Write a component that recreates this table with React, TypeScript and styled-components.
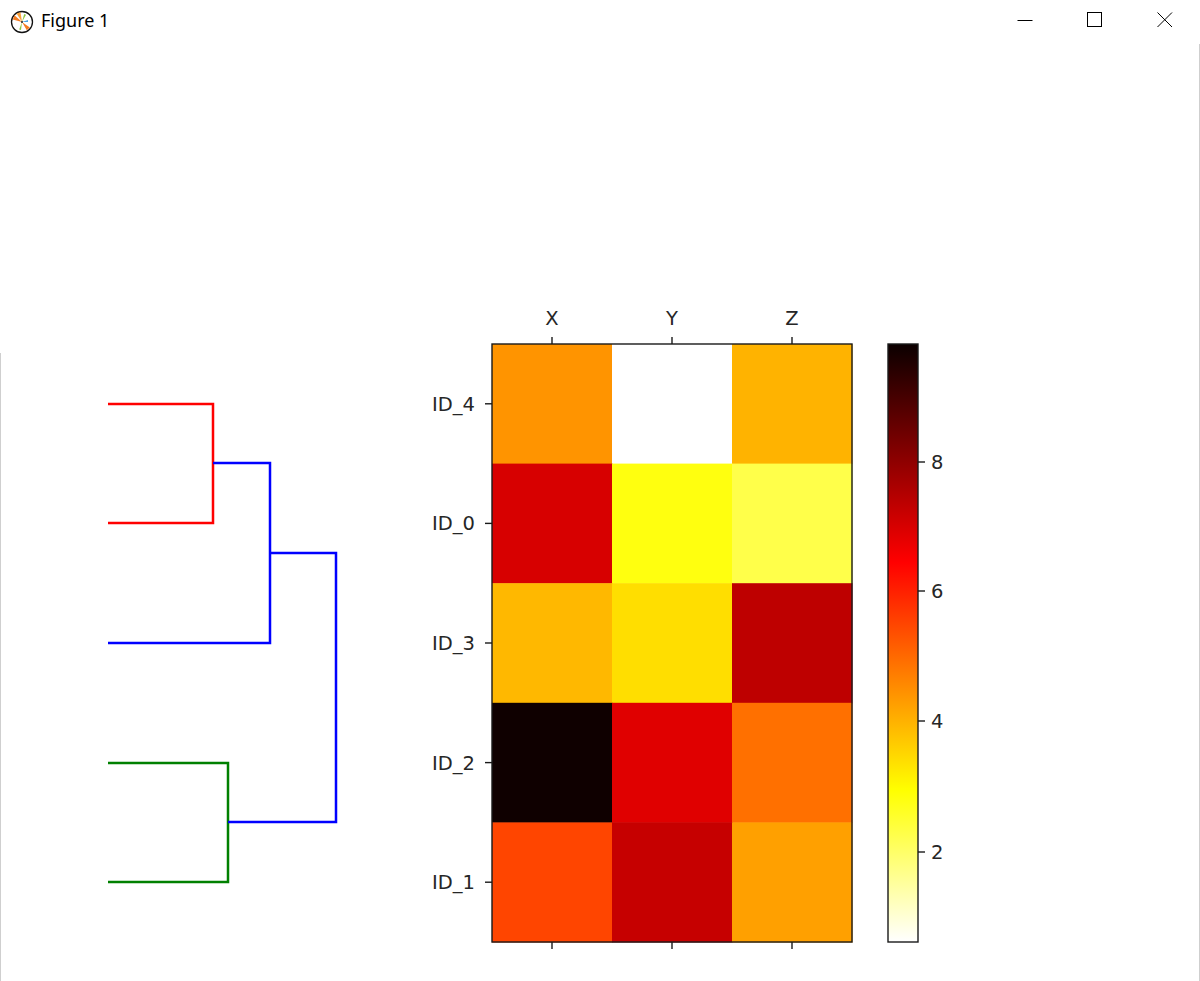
import styled, { createGlobalStyle } from "styled-components";

const GlobalStyle = createGlobalStyle`
  html, body {
    margin: 0;
    padding: 0;
    background: #ffffff;
  }
`;

const Window = styled.div`
  width: 1200px;
  height: 981px;
  display: flex;
  flex-direction: column;
  background: #ffffff;
  overflow: hidden;
`;

const TitleBar = styled.div`
  height: 44px;
  flex: none;
  display: flex;
  align-items: center;
  padding-left: 10px;
  font-family: "Noto Sans", "Open Sans", sans-serif;
`;

const Title = styled.span`
  margin-left: 7px;
  margin-top: -4px;
  font-size: 18px;
  color: #000000;
`;

const Controls = styled.div`
  margin-left: auto;
  display: flex;
  height: 100%;
`;

const ControlButton = styled.div`
  width: 70px;
  height: 100%;
  display: flex;
  align-items: center;
  justify-content: center;
  padding-bottom: 4px;
  box-sizing: border-box;
`;

const Canvas = styled.div`
  flex: 1;
  border-right: 1px solid #cfcfcf;
  display: flex;
`;

const Plot = styled.svg`
  display: block;
  font-family: "DejaVu Sans", sans-serif;
`;

// hot colormap sampled per cell, rows top to bottom
const rows = [
  { label: "ID_4", cells: ["#ff9400", "#ffffff", "#ffb300"] },
  { label: "ID_0", cells: ["#d70000", "#ffff0f", "#ffff4a"] },
  { label: "ID_3", cells: ["#ffb800", "#ffde00", "#be0000"] },
  { label: "ID_2", cells: ["#0f0000", "#e00000", "#ff7000"] },
  { label: "ID_1", cells: ["#ff4500", "#c60000", "#ffa000"] },
];
const cols = ["X", "Y", "Z"];

const links = [
  { color: "#ff0000", pts: "108,404 213,404 213,523 108,523" },
  { color: "#0000ff", pts: "213,463 270,463 270,643 108,643" },
  { color: "#008000", pts: "108,763 228,763 228,882 108,882" },
  { color: "#0000ff", pts: "270,553 336,553 336,822 228,822" },
];

const cbTicks = [
  { v: "8", y: 462 },
  { v: "6", y: 591 },
  { v: "4", y: 721 },
  { v: "2", y: 852 },
];

const left = 492;
const top = 344;
const cw = 120;
const ch = 119.6;

const AppIcon = () => (
  <svg width="24" height="24" viewBox="0 0 24 24">
    <circle cx="12" cy="12" r="10.5" fill="#fff" stroke="#111" strokeWidth="1.3" />
    <path d="M12 12 L2.8 9.5 L4.5 5.2 Z" fill="#f47b20" />
    <path d="M12 12 L6.5 3.5 L10.5 2.2 Z" fill="#f9a03c" />
    <path d="M12 12 L19.8 17.5 L16.8 20.2 Z" fill="#f47b20" />
    <path d="M12 12 L16 4.8 L14.2 4 Z" fill="#8cc63f" />
    <path d="M12 12 L9.2 19.5 L11 20 Z" fill="#8cc63f" />
    <path d="M12 12 L18 10 L18 12 Z" fill="#4aa3df" />
    <circle cx="12" cy="12" r="1" fill="#222" />
  </svg>
);

export default function App() {
  return (
    <>
      <GlobalStyle />
      <Window>
        <TitleBar>
          <AppIcon />
          <Title>Figure 1</Title>
          <Controls>
            <ControlButton>
              <svg width="16" height="16" viewBox="0 0 16 16">
                <line x1="0.5" y1="8.5" x2="15.5" y2="8.5" stroke="#000" strokeWidth="1" />
              </svg>
            </ControlButton>
            <ControlButton>
              <svg width="16" height="16" viewBox="0 0 16 16">
                <rect x="0.5" y="0.5" width="14" height="14" fill="none" stroke="#000" strokeWidth="1" />
              </svg>
            </ControlButton>
            <ControlButton>
              <svg width="16" height="16" viewBox="0 0 16 16">
                <path d="M0.5 0.5 L15 15 M15 0.5 L0.5 15" stroke="#000" strokeWidth="1" />
              </svg>
            </ControlButton>
          </Controls>
        </TitleBar>
        <Canvas>
          <Plot width="1199" height="937" viewBox="0 44 1199 937">
            <defs>
              <linearGradient id="hot_r" x1="0" y1="0" x2="0" y2="1">
                <stop offset="0" stopColor="#0b0000" />
                <stop offset="0.365" stopColor="#ff0000" />
                <stop offset="0.746" stopColor="#ffff00" />
                <stop offset="1" stopColor="#ffffff" />
              </linearGradient>
            </defs>

            <line x1="0.5" y1="353" x2="0.5" y2="981" stroke="#cfcfcf" strokeWidth="1" />

            {links.map((l, i) => (
              <polyline
                key={i}
                points={l.pts}
                fill="none"
                stroke={l.color}
                strokeWidth="2.5"
                strokeLinejoin="miter"
              />
            ))}

            {rows.map((r, ri) =>
              r.cells.map((c, ci) => (
                <rect
                  key={`${ri}-${ci}`}
                  x={left + ci * cw}
                  y={top + ri * ch}
                  width={cw + 0.5}
                  height={ch + 0.5}
                  fill={c}
                />
              ))
            )}
            <rect
              x={left}
              y={top}
              width={cw * 3}
              height={ch * 5}
              fill="none"
              stroke="#1a1a1a"
              strokeWidth="1.4"
            />

            {cols.map((c, i) => {
              const x = left + cw / 2 + i * cw;
              return (
                <g key={c}>
                  <line x1={x} y1={top - 7} x2={x} y2={top} stroke="#1a1a1a" strokeWidth="1.4" />
                  <line
                    x1={x}
                    y1={top + ch * 5}
                    x2={x}
                    y2={top + ch * 5 + 7}
                    stroke="#1a1a1a"
                    strokeWidth="1.4"
                  />
                  <text x={x} y={325} fontSize="19.5" textAnchor="middle" fill="#262626">
                    {c}
                  </text>
                </g>
              );
            })}

            {rows.map((r, i) => {
              const y = top + ch / 2 + i * ch;
              return (
                <g key={r.label}>
                  <line x1={left - 7} y1={y} x2={left} y2={y} stroke="#1a1a1a" strokeWidth="1.4" />
                  <text x={475} y={y + 7} fontSize="19.5" textAnchor="end" fill="#262626">
                    {r.label}
                  </text>
                </g>
              );
            })}

            <rect x="888" y={top} width="30" height={ch * 5} fill="url(#hot_r)" />
            <rect
              x="888"
              y={top}
              width="30"
              height={ch * 5}
              fill="none"
              stroke="#1a1a1a"
              strokeWidth="1.4"
            />
            {cbTicks.map((t) => (
              <g key={t.v}>
                <line x1="918" y1={t.y} x2="925" y2={t.y} stroke="#1a1a1a" strokeWidth="1.4" />
                <text x="931" y={t.y + 7} fontSize="19.5" fill="#262626">
                  {t.v}
                </text>
              </g>
            ))}
          </Plot>
        </Canvas>
      </Window>
    </>
  );
}
